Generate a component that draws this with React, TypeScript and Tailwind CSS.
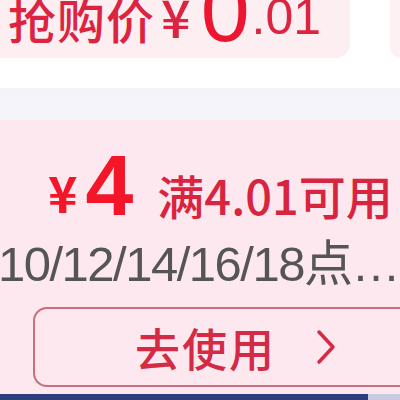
const font = { fontFamily: '"Noto Sans CJK SC", "Noto Sans", sans-serif' }
const latin = { fontFamily: '"Liberation Sans", "Noto Sans CJK SC", sans-serif' }

export default function App() {
  return (
    <div className="relative w-[400px] h-[400px] overflow-hidden bg-white" style={font}>
      {/* 顶部抢购卡片 */}
      <div className="flex h-[60px]">
        <div className="w-[350px] h-[58px] bg-[#fdeef2] rounded-br-[14px] flex items-end pl-[8px] pb-[16px] text-[#dc2340] whitespace-nowrap">
          <span className="text-[48px] leading-none font-medium tracking-[1px]">抢购价</span>
          <span className="text-[52px] leading-none ml-[6px] font-medium">¥</span>
          <span className="text-[88px] leading-[0.72] ml-[10px] text-[#ee1530]" style={latin}>0</span>
          <span className="text-[50px] leading-none ml-[2px]" style={latin}>.01</span>
        </div>
        <div className="ml-[40px] flex-1 h-[58px] bg-[#fdf1f4] rounded-bl-[10px]" />
      </div>

      {/* 间隔 */}
      <div className="h-[28px] bg-white" />
      <div className="h-[32px] bg-gradient-to-b from-[#f3f4fa] to-[#f5f4fa]" />

      {/* 优惠券 */}
      <div className="bg-[#fde8ef] h-[274px] flex flex-col">
        <div className="flex items-end pl-[48px] pt-[36px] h-[100px] whitespace-nowrap">
          <span className="text-[50px] leading-none font-bold text-[#f31528] pb-[4px]">¥</span>
          <span className="text-[86px] leading-[0.8] font-bold text-[#f31528] ml-[8px]" style={latin}>4</span>
          <span className="text-[47px] leading-none text-[#d9243f] ml-[24px] pb-[2px] font-medium">满4.01可用</span>
        </div>
        <div className="mt-[20px] text-[49px] leading-none text-[#555555] whitespace-nowrap tracking-[-1.5px] -ml-[2px]" style={latin}>
          10/12/14/16/18点…
        </div>
        <div className="mt-[18px] ml-[33px] w-[400px] h-[80px] border-2 border-[#c9707e] rounded-[14px] flex items-center pl-[100px] text-[#d42a45]">
          <span className="text-[45px] leading-none font-medium tracking-[2px]">去使用</span>
          <svg className="ml-[40px] w-[20px] h-[36px]" viewBox="0 0 20 36" fill="none" stroke="currentColor" strokeWidth={3.5} strokeLinecap="round" strokeLinejoin="round">
            <path d="M3 3 L17 18 L3 33" />
          </svg>
        </div>
      </div>

      {/* 底部线条 */}
      <div className="flex h-[6px]">
        <div className="w-[368px] bg-[#2c3c7c]" />
        <div className="flex-1 bg-[#c8cbe0]" />
      </div>
    </div>
  )
}
